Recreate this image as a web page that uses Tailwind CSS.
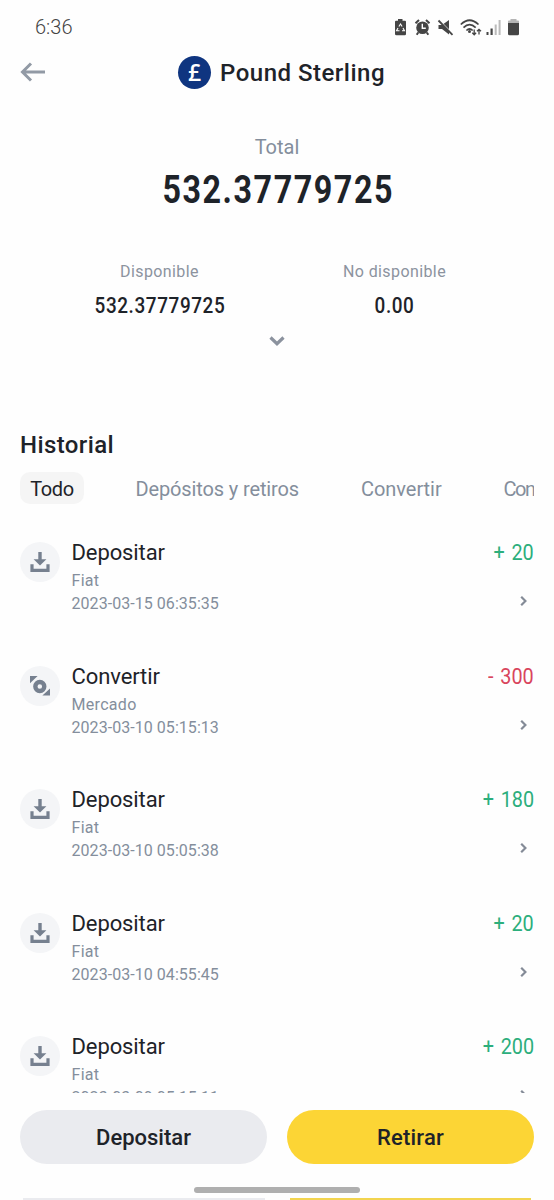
<!DOCTYPE html>
<html lang="es">
<head>
<meta charset="utf-8">
<title>Pound Sterling</title>
<script src="https://cdn.jsdelivr.net/npm/@tailwindcss/browser@4"></script>
</head>
<body class="bg-[#fefefe]">
<svg class="hidden">
  <symbol id="dep" viewBox="0 0 20 20"><path d="M8.300 0h3.400v7.200h4.700L10 13.600 3.600 7.200h4.700zM.4 12.300h3.200v4.400h12.800v-4.400h3.200V20H.4z" fill="#76808f"/></symbol>
  <symbol id="conv" viewBox="0 0 21 21"><path d="M0 0h8L0 7.600zM21 20.600h-8l8-7.600z" fill="#76808f"/><circle cx="10.300" cy="11" r="4.700" fill="none" stroke="#76808f" stroke-width="4.600"/></symbol>
  <symbol id="chev" viewBox="0 0 8 12"><path d="M1.200 1.800 5.400 6 1.200 10.200" fill="none" stroke="#848b97" stroke-width="2.200"/></symbol>
</svg>
<div class="h-[1200px] w-[554px] overflow-hidden flex flex-col bg-[#fefefe] text-[#1e2329] font-['Roboto',sans-serif] whitespace-nowrap">
  <div class="h-[50px] shrink-0 flex items-center justify-between pl-[35px] pr-[33px] pt-1">
    <span class="text-[20px] text-[#444] leading-none font-light">6:36</span>
    <svg class="w-[128px] h-[20px]" viewBox="393 16 128 20" fill="#454545">
      <path d="M398 18h4.500v1.800H405q1 0 1 1V33q0 1.300-1.300 1.300h-8.200Q395 34.300 395 33V20.800q0-1 1-1h2z"/>
      <path d="M398.900 25.500 400.500 23l1.600 2.500M403 27l1.500 2.800h-2.500M399.500 29.800h-3l1.500-2.800" fill="none" stroke="#fff" stroke-width="1.100"/>
      <circle cx="422.500" cy="26.700" r="6.300"/>
      <path d="M415.500 22.200 419 19M426 19l3.500 3.200M418.200 31.500l-1.500 2.200M426.800 31.500l1.500 2.200" stroke="#454545" stroke-width="2" fill="none"/>
      <path d="M422.300 22.800v4.400h3.500" fill="none" stroke="#fff" stroke-width="1.400"/>
      <path d="M438.500 24h3.500l7-5v14.500l-7-5.500h-3.500z"/>
      <path d="M438 18.200 453 33.200" stroke="#fefefe" stroke-width="1.600"/><path d="M438.500 19.500 452.500 33.800" stroke="#454545" stroke-width="1.800"/>
      <g fill="none" stroke="#454545" stroke-width="1.700"><path d="M460.800 23.500Q469.500 15 478.500 23.500M463.500 26.600Q469.500 20.500 475.700 26.600M466.400 29.500Q469.500 26.500 472.700 29.500"/><path d="M474.200 28.500v5M472.300 31.700l1.900 2 1.900-2M479 33.500v-5M477 30.300l2-2 2 2" stroke-width="1.300"/></g>
      <circle cx="469.500" cy="30.500" r="1.500"/>
      <path d="M486.500 31h2v3h-2zM490.500 27.500h2.200V34h-2.200z"/><path d="M494.700 23.500h2V34h-2zM498.600 19h2v15h-2z" fill="#bbb"/>
      <path d="M508 22v-1.800q0-.8.8-.8h1.700V18h6v1.400h1.700q.8 0 .8.8V22z" fill="#b5b5b5"/><path d="M508 22h11v10.800q0 1.500-1.500 1.500h-8Q508 34.300 508 32.800z"/>
    </svg>
  </div>
  <div class="h-[44px] shrink-0 grid grid-cols-[158px_1fr_149px] items-center">
    <svg class="ml-5 w-[26px] h-[20px]" viewBox="0 0 26 20" fill="none" stroke="#929aa5" stroke-width="3"><path d="M25 10H3M11 1.500 2.500 10l8.500 8.500"/></svg>
    <div class="flex items-center pl-5 gap-[9px]">
      <span class="size-[33px] shrink-0 rounded-full bg-[#0f3580] text-white flex items-center justify-center font-['Open_Sans',sans-serif] text-[23px] font-semibold leading-none">£</span>
      <span class="text-[24px] font-medium leading-none tracking-[0.5px] pt-[1px]">Pound Sterling</span>
    </div>
  </div>
  <div class="shrink-0 h-[141px] pt-[41px] flex flex-col items-center">
    <span class="text-[20px] leading-[24px] text-[#848e9c]">Total</span>
    <span class="mt-[8px] text-[38px] leading-[46px] font-bold origin-center scale-x-[0.85] tracking-[1.800px] mr-[-1.800px]">532.37779725</span>
  </div>
  <div class="shrink-0 grid grid-cols-2 px-[42px] pt-[27px] h-[93px] text-center">
    <div><div class="text-[16px] leading-[20px] tracking-[0.4px] text-[#8c939e]">Disponible</div><div class="mt-[11px] pl-px text-[22px] leading-[26px] font-medium scale-x-[0.86] tracking-[0.700px]">532.37779725</div></div>
    <div><div class="text-[16px] leading-[20px] tracking-[0.4px] text-[#8c939e]">No disponible</div><div class="mt-[11px] text-[22px] leading-[26px] font-medium scale-x-[0.86] tracking-[0.700px]">0.00</div></div>
  </div>
  <div class="shrink-0 h-[100px] flex justify-center pt-2"><svg class="w-4 h-[11px]" viewBox="0 0 16 11" fill="none" stroke="#8b929e" stroke-width="3.200"><path d="m1.500 1.500 6.500 6.200 6.500-6.200"/></svg></div>
  <h2 class="shrink-0 h-[44px] pl-5 pt-[2px] text-[24px] leading-[30px] font-medium tracking-[0.400px]">Historial</h2>
  <div class="shrink-0 mx-5 h-[32px] flex items-center overflow-hidden text-[20px] text-[#848e9c]">
    <span class="w-[64px] h-[32px] shrink-0 flex items-center justify-center rounded-[10px] bg-[#f5f5f5] text-[#1e2329] tracking-[-0.400px] pt-px">Todo</span>
    <span class="w-[226px] pl-[51.500px] pt-px shrink-0 tracking-[-0.130px]">Depósitos y retiros</span>
    <span class="w-[143px] pl-[51px] pt-px shrink-0 tracking-[-0.050px]">Convertir</span>
    <span class="pl-[50.500px] pt-px shrink-0 tracking-[-1.500px]">Convertir</span>
  </div>
  <div id="list" class="shrink-0 h-[589px] overflow-hidden px-5 pt-[34px]"></div>
</div>
<template id="row">
  <div class="h-[123.600px] flex">
    <span class="mt-[4px] size-[40px] shrink-0 rounded-full bg-[#f4f5f7] flex items-center justify-center"><svg class="size-[20px]"><use/></svg></span>
    <div class="ml-[11.500px] flex-1 pt-px">
      <div data-t class="text-[22px] leading-[28px] tracking-[-0.100px]"></div>
      <div data-s class="mt-[4px] text-[16px] leading-[20px] tracking-[0.3px] text-[#848e9c]"></div>
      <div data-d class="mt-[3px] text-[16px] leading-[20px] tracking-[0.050px] text-[#848e9c]"></div>
    </div>
    <div class="flex flex-col items-end pt-px">
      <div data-a class="text-[22px] leading-[28px] origin-right scale-x-[0.90] [word-spacing:2px]"></div>
      <svg class="mt-[28px] mr-[6.500px] w-[8px] h-[12px]"><use href="#chev"/></svg>
    </div>
  </div>
</template>
<div class="absolute left-0 top-[1094px] h-[106px] w-[554px] overflow-hidden bg-[#fefefe] font-['Roboto',sans-serif] text-[22px] font-medium text-[#1e2329]">
  <div class="grid grid-cols-2 gap-5 px-5 pt-[16px]">
    <button class="h-[54px] rounded-full bg-[#eaebef]">Depositar</button>
    <button class="h-[54px] rounded-full bg-[#fcd535] tracking-[0.200px]">Retirar</button>
  </div>
  <div class="mt-[23px] mx-auto w-[166px] h-[6px] rounded-full bg-[#afafaf]"></div>
  <div class="mt-[5px] grid grid-cols-2 gap-[25px] px-[23px]"><div class="h-[2px] bg-[#eaebef]"></div><div class="h-[2px] bg-[#f2d44f]"></div></div>
</div>
<script>
const rows = [
  ['dep','Depositar','Fiat','2023-03-15 06:35:35','+ 20'],
  ['conv','Convertir','Mercado','2023-03-10 05:15:13','- 300'],
  ['dep','Depositar','Fiat','2023-03-10 05:05:38','+ 180'],
  ['dep','Depositar','Fiat','2023-03-10 04:55:45','+ 20'],
  ['dep','Depositar','Fiat','2023-03-09 05:15:11','+ 200'],
];
const tpl = document.getElementById('row'), list = document.getElementById('list');
for (const [i,t,s,d,a] of rows) {
  const n = tpl.content.cloneNode(true);
  n.querySelector('use').setAttribute('href', '#' + i);
  n.querySelector('[data-t]').textContent = t;
  n.querySelector('[data-s]').textContent = s;
  n.querySelector('[data-d]').textContent = d;
  const e = n.querySelector('[data-a]');
  e.textContent = a;
  e.classList.add(a[0] === '+' ? 'text-[#2cae7c]' : 'text-[#d9455c]');
  list.appendChild(n);
}
</script>
</body>
</html>
